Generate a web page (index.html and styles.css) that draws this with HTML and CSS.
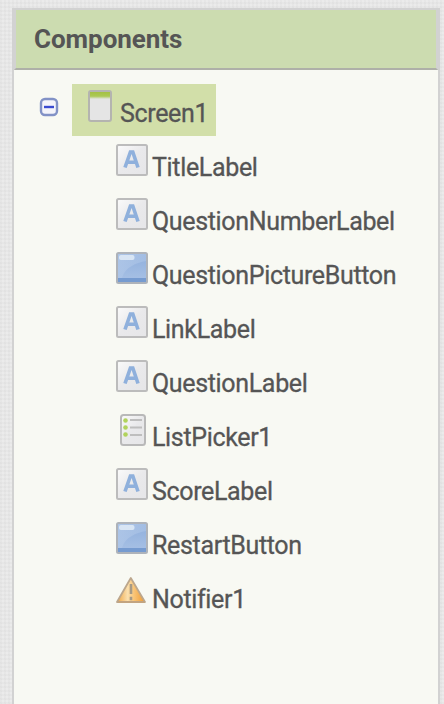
FILE: index.html
```
<!DOCTYPE html>
<html lang="en">
<head>
<meta charset="utf-8">
<title>Components</title>
<link rel="stylesheet" href="styles.css">
</head>
<body>
<svg width="0" height="0" class="defs" aria-hidden="true">
  <defs>
    <linearGradient id="paper" x1="0" y1="0" x2="1" y2="1"><stop offset="0" stop-color="#fbfbfb"/><stop offset=".5" stop-color="#e9e9eb"/><stop offset="1" stop-color="#e6e6e8"/></linearGradient>
    <linearGradient id="blue" x1="0" y1="0" x2="0" y2="1"><stop offset="0" stop-color="#8eaedb"/><stop offset="1" stop-color="#a9c2e6"/></linearGradient>
    <linearGradient id="shine" x1="0" y1="0" x2="1" y2="1"><stop offset="0" stop-color="#c4d6ef"/><stop offset="1" stop-color="#a0bce3"/></linearGradient>
    <linearGradient id="amber" x1="0" y1="0" x2="1" y2="0"><stop offset="0" stop-color="#eea544"/><stop offset=".38" stop-color="#fbdfad"/><stop offset=".6" stop-color="#f9c578"/><stop offset="1" stop-color="#ee9a32"/></linearGradient>
    <linearGradient id="leaf" x1="0" y1="0" x2="0" y2="1"><stop offset="0" stop-color="#a4c143"/><stop offset=".6" stop-color="#abc855"/><stop offset="1" stop-color="#e5e5e5"/></linearGradient>
    <symbol id="label" viewBox="0 0 32 32">
      <rect x="1" y="1" width="30" height="30" rx="1.5" fill="url(#paper)" stroke="#bcbcbc" stroke-width="2"/>
      <path d="M9 23.5 14.4 8h2.4L22 23.5M11.3 18.3h8.4" fill="none" stroke="#8fb0dc" stroke-width="3.6"/>
    </symbol>
    <symbol id="button" viewBox="0 0 32 32">
      <rect x="1" y="1" width="30" height="30" rx="1.5" fill="url(#blue)"/>
      <path d="M2 2h28v7C20 11 9 15 6 26H2z" fill="url(#shine)" opacity=".55"/>
      <rect x="3" y="3" width="15.5" height="5" rx="2" fill="#e4edf8" opacity=".8"/>
      <path d="M2 26h28v4H2z" fill="#769bd0"/>
      <rect x="1" y="1" width="30" height="30" rx="1.5" fill="none" stroke="#aeb3ba" stroke-width="2"/>
    </symbol>
    <symbol id="list" viewBox="0 0 32 32">
      <rect x="5" y="1" width="24" height="30" rx="2.5" fill="url(#paper)" stroke="#b9b9b9" stroke-width="2"/>
      <g fill="#b1d35c"><circle cx="9.5" cy="6.5" r="2.3"/><circle cx="9.5" cy="13.5" r="2.3"/><circle cx="9.5" cy="20.5" r="2.3"/></g>
      <path d="M14 6h12M14 13.5h12M14 21h12" stroke="#bebebe" stroke-width="2"/>
    </symbol>
    <symbol id="warning" viewBox="0 0 32 32">
      <path d="M14.8 2 29 26H1z" fill="url(#amber)" stroke="#bca78d" stroke-width="1.8" stroke-linejoin="round"/>
      <path d="M2 26h26.5" stroke="#c4a37d" stroke-width="1.5"/>
      <path d="M15 8v10M15 20.8v3.4" stroke="#a69a86" stroke-width="2.6"/>
    </symbol>
  </defs>
</svg>
<main class="panel">
  <h1 class="header">Components</h1>
  <section class="tree">
    <div class="root">
      <svg class="toggle" viewBox="0 0 20 20"><rect x="2" y="2" width="16" height="16" rx="4" fill="#f4f4fa" stroke="#8292c6" stroke-width="2.4"/><path d="M5 10h10" stroke="#3a4bd0" stroke-width="2.4"/></svg>
      <div class="selected">
        <svg class="icon" viewBox="0 0 32 32"><rect x="5" y="1" width="22" height="30" rx="2" fill="#e5e5e5" stroke="#b4b4b0" stroke-width="2"/><path d="M6 2h20v7H6z" fill="url(#leaf)"/></svg>
        <span class="name">Screen1</span>
      </div>
    </div>
    <ul class="children">
      <li><svg class="icon"><use href="#label"/></svg><span class="name">TitleLabel</span></li>
      <li><svg class="icon"><use href="#label"/></svg><span class="name">QuestionNumberLabel</span></li>
      <li><svg class="icon"><use href="#button"/></svg><span class="name">QuestionPictureButton</span></li>
      <li><svg class="icon"><use href="#label"/></svg><span class="name">LinkLabel</span></li>
      <li><svg class="icon"><use href="#label"/></svg><span class="name">QuestionLabel</span></li>
      <li><svg class="icon"><use href="#list"/></svg><span class="name">ListPicker1</span></li>
      <li><svg class="icon"><use href="#label"/></svg><span class="name">ScoreLabel</span></li>
      <li><svg class="icon"><use href="#button"/></svg><span class="name">RestartButton</span></li>
      <li><svg class="icon"><use href="#warning"/></svg><span class="name">Notifier1</span></li>
    </ul>
  </section>
</main>
</body>
</html>
```
FILE: styles.css
```
* { box-sizing: border-box; }
body {
  margin: 0;
  height: 704px;
  padding: 8px 4px 0 12px;
  overflow: hidden;
  font-family: Roboto, sans-serif;
  color: #555;
  background-color: #ebebeb;
  background-image:
    repeating-linear-gradient(0deg, rgba(0,0,0,.02) 0 2px, transparent 2px 4px),
    repeating-linear-gradient(90deg, rgba(0,0,0,.02) 0 2px, transparent 2px 4px);
}
.defs { display: block; width: 0; height: 0; }
.panel {
  height: 696px;
  background: #f8f9f3;
  border: 2px solid #d2d2d2;
  border-bottom: 0;
}
.header {
  margin: 0;
  height: 60px;
  padding-left: 18px;
  background: #ccdcb0;
  border: solid #d2d2d2;
  border-width: 0 2px 2px;
  border-bottom-color: #aeb0a8;
  font-size: 26px;
  letter-spacing: -.05px;
  line-height: 58px;
  font-weight: 700;
}
.tree { padding-top: 14px; }
.root { display: flex; height: 52px; }
.toggle { width: 20px; height: 20px; margin: 13px 13px 0 25px; }
.selected {
  display: flex;
  width: 144px;
  padding: 6px 0 0 12px;
  background: #d2dfa9;
}
.icon { flex: none; width: 32px; height: 32px; display: block; }
.name {
  margin: 9px 0 0 4px;
  font-size: 25px;
  letter-spacing: -.34px;
  line-height: 30px;
  white-space: nowrap;
  -webkit-text-stroke: .3px #555;
}
.children { margin: 0; padding: 8px 0 0 102px; list-style: none; }
.children li { display: flex; height: 54px; }
```
